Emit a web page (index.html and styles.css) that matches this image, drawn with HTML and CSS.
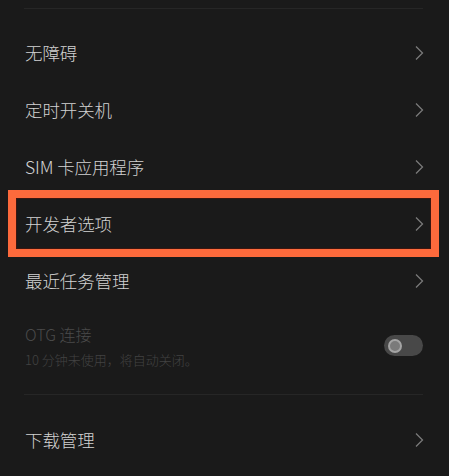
FILE: index.html
```html
<!DOCTYPE html>
<html lang="zh-CN">
<head>
<meta charset="utf-8">
<title>设置</title>
<link rel="stylesheet" href="styles.css">
</head>
<body>
<div class="page">
  <div class="divider top"></div>
  <ul class="list">
    <li class="row"><span class="label">无障碍</span><svg class="chev" viewBox="0 0 10 16"><path d="M2 1.5 L8.5 8 L2 14.5"/></svg></li>
    <li class="row"><span class="label">定时开关机</span><svg class="chev" viewBox="0 0 10 16"><path d="M2 1.5 L8.5 8 L2 14.5"/></svg></li>
    <li class="row"><span class="label">SIM 卡应用程序</span><svg class="chev" viewBox="0 0 10 16"><path d="M2 1.5 L8.5 8 L2 14.5"/></svg></li>
    <li class="row highlighted"><span class="label">开发者选项</span><svg class="chev" viewBox="0 0 10 16"><path d="M2 1.5 L8.5 8 L2 14.5"/></svg><span class="mark"></span></li>
    <li class="row"><span class="label">最近任务管理</span><svg class="chev" viewBox="0 0 10 16"><path d="M2 1.5 L8.5 8 L2 14.5"/></svg></li>
    <li class="row row-otg">
      <div class="texts">
        <span class="otg-title">OTG 连接</span>
        <span class="otg-sub">10 分钟未使用，将自动关闭。</span>
      </div>
      <span class="toggle"><span class="knob"></span></span>
    </li>
  </ul>
  <div class="divider mid"></div>
  <ul class="list">
    <li class="row"><span class="label">下载管理</span><svg class="chev" viewBox="0 0 10 16"><path d="M2 1.5 L8.5 8 L2 14.5"/></svg></li>
  </ul>
</div>
</body>
</html>
```
FILE: styles.css
```css
html, body {
  margin: 0;
  padding: 0;
  background: #1a1a1a;
}
body {
  width: 449px;
  height: 476px;
  overflow: hidden;
  font-family: "Noto Sans CJK SC", "Noto Sans", sans-serif;
  font-weight: 300;
  color: #d2d2d2;
}
.page {
  padding: 8px 26px 0 25px;
}
.divider {
  height: 1px;
  background: #262626;
  margin-left: -1px;
}
.divider.top {
  margin-bottom: 15px;
}
.divider.mid {
  margin-top: 16px;
  margin-bottom: 16px;
}
.list {
  list-style: none;
  margin: 0;
  padding: 0;
}
.row {
  position: relative;
  height: 57px;
  display: flex;
  align-items: center;
  justify-content: space-between;
}
.label {
  font-size: 17.5px;
  line-height: 1;
  letter-spacing: -0.1px;
}
.chev {
  width: 10px;
  height: 16px;
  margin-right: -1px;
}
.chev path {
  fill: none;
  stroke: #7a7a7a;
  stroke-width: 1.3;
}
.mark {
  position: absolute;
  left: -17px;
  right: -16px;
  top: -5px;
  bottom: -5px;
  border: 8px solid #fd6a3c;
  box-shadow: inset 0 0 0 1px #3a1610;
}
.row-otg {
  height: 69px;
  align-items: flex-start;
}
.texts {
  display: flex;
  flex-direction: column;
  padding-top: 15px;
}
.otg-title {
  font-size: 16px;
  line-height: 20px;
  color: #4a4a4a;
}
.otg-sub {
  font-size: 13px;
  line-height: 18px;
  margin-top: 7px;
  color: #424242;
}
.toggle {
  margin-top: 26px;
  width: 39px;
  height: 21px;
  border-radius: 11px;
  background: #484848;
  display: flex;
  align-items: center;
  padding-left: 4px;
  box-sizing: border-box;
}
.knob {
  width: 14px;
  height: 14px;
  border-radius: 50%;
  background: #7a7a7a;
  border: 2.5px solid #a4a4a4;
  box-sizing: border-box;
}
```
